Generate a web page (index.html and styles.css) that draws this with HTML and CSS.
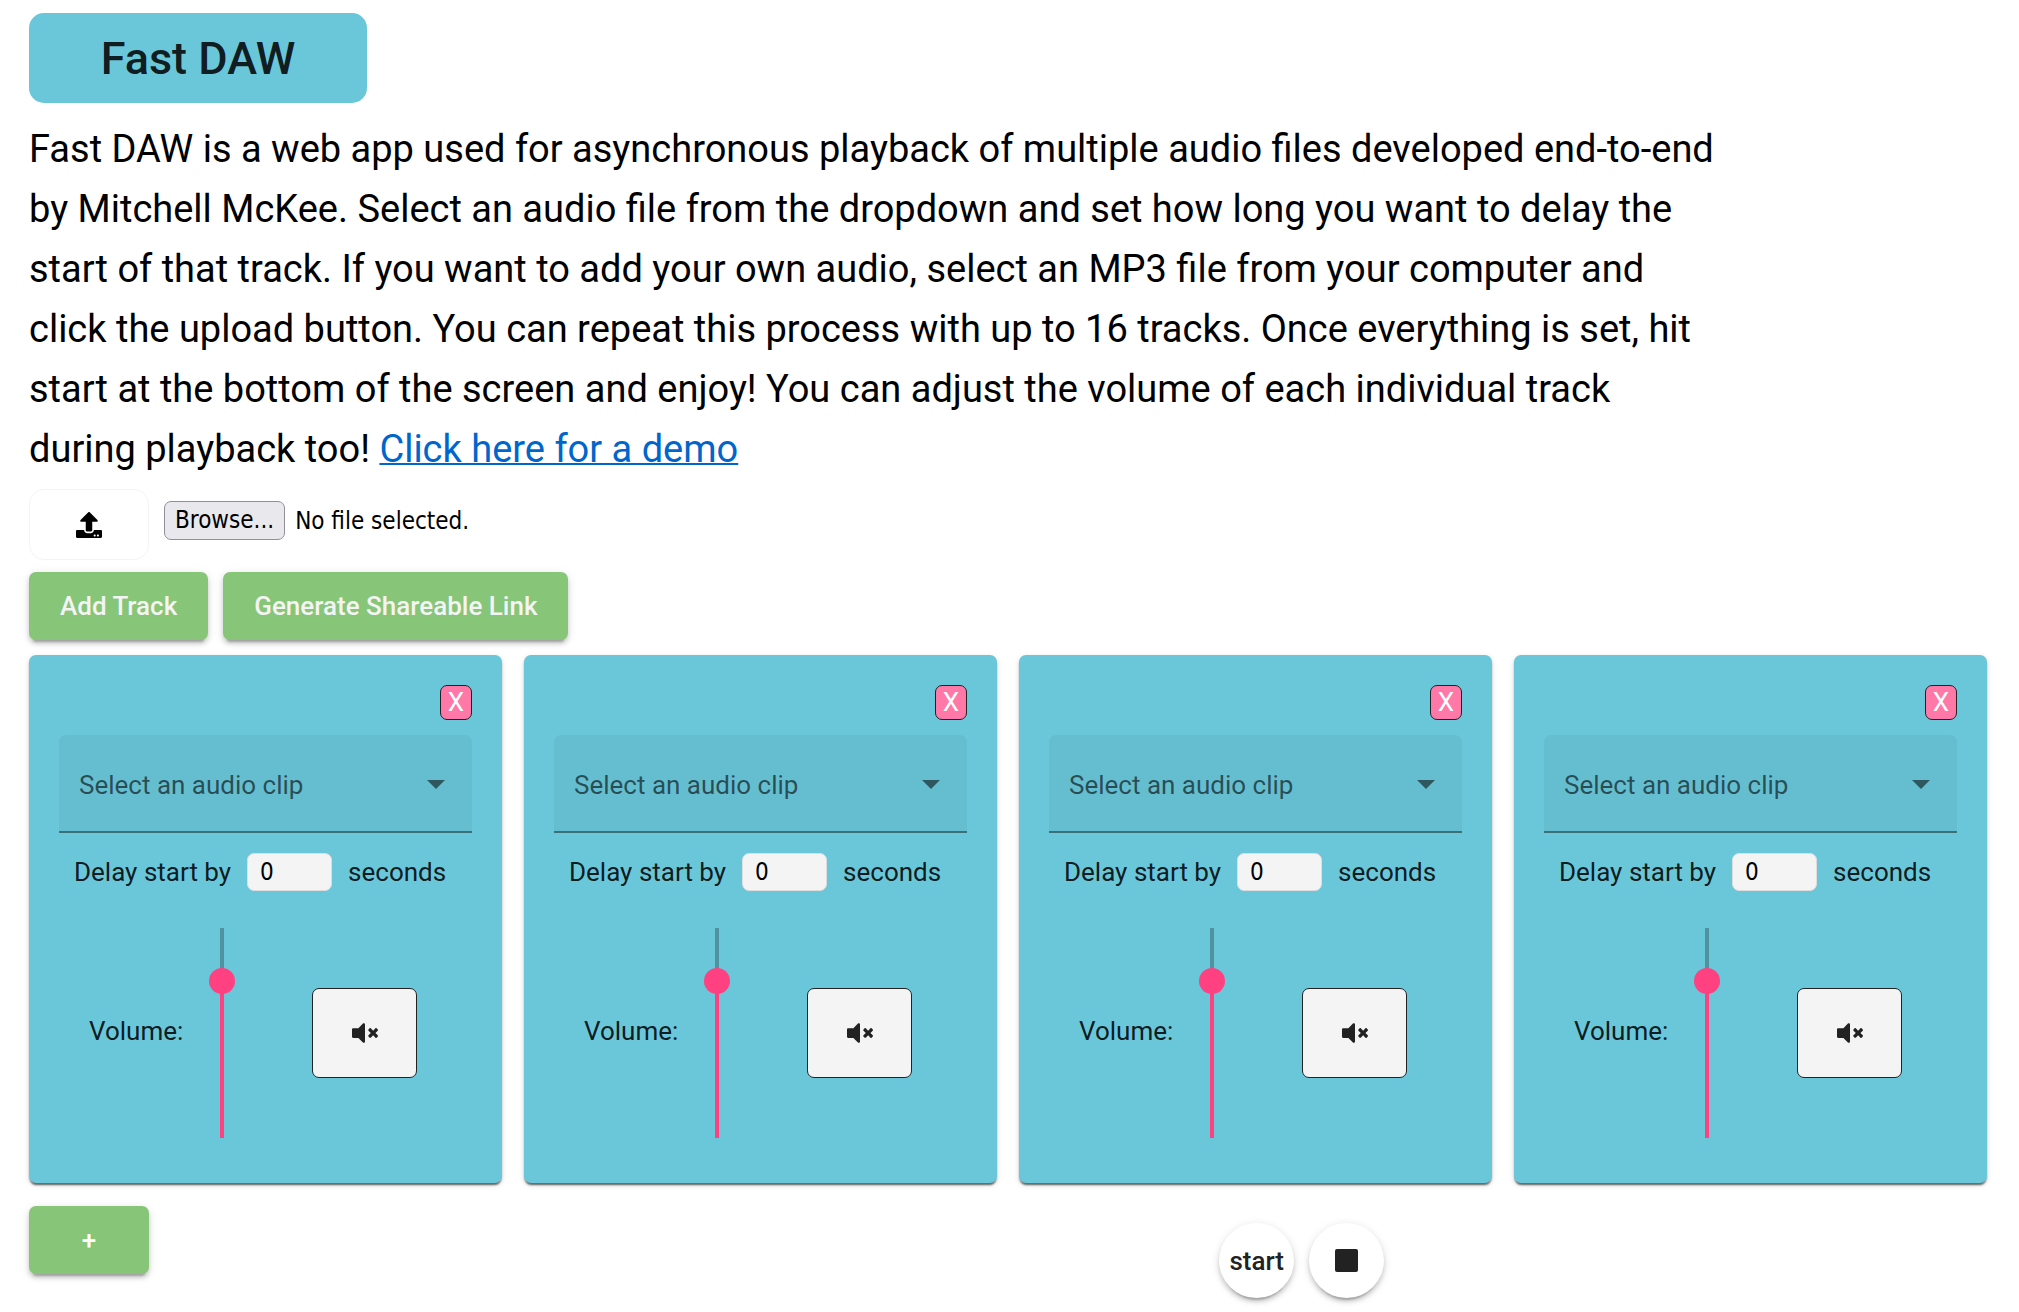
FILE: index.html
```html
<!DOCTYPE html>
<html lang="en">
<head>
<meta charset="utf-8">
<meta name="viewport" content="width=device-width, initial-scale=1">
<title>Fast DAW</title>
<link rel="stylesheet" href="styles.css">
</head>
<body>
<svg class="sprite" aria-hidden="true">
  <symbol id="icon-upload" viewBox="0 0 512 512"><path d="M296 384h-80c-13.3 0-24-10.7-24-24V192h-87.700c-17.800 0-26.700-21.500-14.100-34.100L242.300 5.700c7.500-7.500 19.800-7.500 27.300 0l152.200 152.200c12.600 12.600 3.700 34.100-14.100 34.100H320v168c0 13.300-10.700 24-24 24zm216-8v112c0 13.300-10.700 24-24 24H24c-13.300 0-24-10.700-24-24V376c0-13.300 10.700-24 24-24h136v8c0 30.900 25.100 56 56 56h80c30.900 0 56-25.100 56-56v-8h136c13.300 0 24 10.700 24 24zm-124 88c0-11-9-20-20-20s-20 9-20 20 9 20 20 20 20-9 20-20zm64 0c0-11-9-20-20-20s-20 9-20 20 9 20 20 20 20-9 20-20z"/></symbol>
  <symbol id="icon-mute" viewBox="0 0 512 512"><path d="M215.030 71.050L126.060 160H24c-13.260 0-24 10.740-24 24v144c0 13.250 10.740 24 24 24h102.060l88.970 88.950c15.030 15.030 40.970 4.470 40.970-16.970V88.020c0-21.460-25.960-31.980-40.970-16.970zM461.640 256l45.640-45.640c6.300-6.300 6.300-16.520 0-22.820l-22.820-22.820c-6.300-6.300-16.520-6.300-22.820 0L416 210.360l-45.640-45.640c-6.300-6.300-16.520-6.300-22.820 0l-22.820 22.820c-6.300 6.300-6.300 16.520 0 22.820L370.360 256l-45.630 45.630c-6.300 6.300-6.300 16.520 0 22.820l22.820 22.820c6.300 6.300 16.520 6.300 22.820 0L416 301.640l45.640 45.640c6.300 6.300 16.520 6.300 22.820 0l22.820-22.820c6.300-6.300 6.300-16.520 0-22.820L461.640 256z"/></symbol>
  <symbol id="icon-stop" viewBox="0 0 23 23"><rect width="23" height="23" rx="2"/></symbol>
  <symbol id="icon-arrow" viewBox="0 0 18 9"><path d="M0 0h18L9 9z"/></symbol>
</svg>

<header>
  <h1 class="brand">Fast DAW</h1>
  <p class="intro">Fast DAW is a web app used for asynchronous playback of multiple audio files developed end-to-end by Mitchell McKee. Select an audio file from the dropdown and set how long you want to delay the start of that track. If you want to add your own audio, select an MP3 file from your computer and click the upload button. You can repeat this process with up to 16 tracks. Once everything is set, hit start at the bottom of the screen and enjoy! You can adjust the volume of each individual track during playback too! <a href="#demo">Click here for a demo</a></p>
</header>

<main>
  <div class="upload">
    <button class="upload-button" type="button" aria-label="Upload"><svg class="icon"><use href="#icon-upload"/></svg></button>
    <label class="file">
      <input class="file-input" type="file" accept="audio/mpeg">
      <span class="file-browse">Browse...</span>
      <span>No file selected.</span>
    </label>
  </div>

  <div class="actions">
    <button class="raised" type="button">Add Track</button>
    <button class="raised" type="button">Generate Shareable Link</button>
  </div>

  <div class="tracks">
    <section class="card">
      <button class="remove" type="button">X</button>
      <div class="clip">
        <select class="clip-select" aria-label="Audio clip"><option>Select an audio clip</option></select>
        <svg class="clip-arrow"><use href="#icon-arrow"/></svg>
      </div>
      <label class="delay">Delay start by <input class="delay-input" type="number" min="0" value="0"> seconds</label>
      <div class="mixer">
        <label class="mixer-label" for="volume-1">Volume:</label>
        <input class="volume" id="volume-1" type="range" value="75">
        <button class="mute" type="button" aria-label="Mute"><svg class="icon"><use href="#icon-mute"/></svg></button>
      </div>
    </section>
    <section class="card">
      <button class="remove" type="button">X</button>
      <div class="clip">
        <select class="clip-select" aria-label="Audio clip"><option>Select an audio clip</option></select>
        <svg class="clip-arrow"><use href="#icon-arrow"/></svg>
      </div>
      <label class="delay">Delay start by <input class="delay-input" type="number" min="0" value="0"> seconds</label>
      <div class="mixer">
        <label class="mixer-label" for="volume-2">Volume:</label>
        <input class="volume" id="volume-2" type="range" value="75">
        <button class="mute" type="button" aria-label="Mute"><svg class="icon"><use href="#icon-mute"/></svg></button>
      </div>
    </section>
    <section class="card">
      <button class="remove" type="button">X</button>
      <div class="clip">
        <select class="clip-select" aria-label="Audio clip"><option>Select an audio clip</option></select>
        <svg class="clip-arrow"><use href="#icon-arrow"/></svg>
      </div>
      <label class="delay">Delay start by <input class="delay-input" type="number" min="0" value="0"> seconds</label>
      <div class="mixer">
        <label class="mixer-label" for="volume-3">Volume:</label>
        <input class="volume" id="volume-3" type="range" value="75">
        <button class="mute" type="button" aria-label="Mute"><svg class="icon"><use href="#icon-mute"/></svg></button>
      </div>
    </section>
    <section class="card">
      <button class="remove" type="button">X</button>
      <div class="clip">
        <select class="clip-select" aria-label="Audio clip"><option>Select an audio clip</option></select>
        <svg class="clip-arrow"><use href="#icon-arrow"/></svg>
      </div>
      <label class="delay">Delay start by <input class="delay-input" type="number" min="0" value="0"> seconds</label>
      <div class="mixer">
        <label class="mixer-label" for="volume-4">Volume:</label>
        <input class="volume" id="volume-4" type="range" value="75">
        <button class="mute" type="button" aria-label="Mute"><svg class="icon"><use href="#icon-mute"/></svg></button>
      </div>
    </section>
  </div>
</main>

<footer class="footer">
  <div><button class="raised raised-add" type="button">+</button></div>
  <div class="transport">
    <button class="fab" type="button">start</button>
    <button class="fab" type="button" aria-label="Stop"><svg class="icon-stop"><use href="#icon-stop"/></svg></button>
  </div>
</footer>
</body>
</html>
```

FILE: styles.css
```css
:root {
  --blue: #6ac6d9;
  --green: #87c578;
  --pink: #ff4081;
  --ink: rgba(0, 0, 0, 0.87);
  --ui: Roboto, "Liberation Sans", sans-serif;
  --system: "DejaVu Sans Condensed", "Noto Sans", sans-serif;
}

* {
  box-sizing: border-box;
}

body {
  margin: 0;
  padding: 13px 32px 14px 29px;
  background: #fff;
  color: #000;
  font-family: var(--ui);
  font-size: 26px;
  line-height: 38px;
}

button {
  margin: 0;
  padding: 0;
  font: inherit;
  cursor: pointer;
}

.sprite {
  display: none;
}

.brand {
  width: fit-content;
  min-width: 338px;
  margin: 0 0 16px;
  padding: 16px 30px 14px;
  border-radius: 15px;
  background: var(--blue);
  color: var(--ink);
  font-size: 45px;
  font-weight: 500;
  line-height: 60px;
  text-align: center;
}

.intro {
  max-width: 1692px;
  margin: 0 0 10px;
  font-size: 38px;
  line-height: 60px;
}

.intro a {
  color: #06c;
  text-decoration-thickness: 2px;
}

.upload {
  display: flex;
  gap: 15px;
  margin-bottom: 12px;
}

.upload-button {
  display: grid;
  place-items: center;
  width: 120px;
  height: 71px;
  border: 1px solid #f4f4f4;
  border-radius: 15px;
  background: #fff;
}

.icon {
  width: 26px;
  height: 26px;
  fill: currentColor;
}

.file {
  position: relative;
  display: flex;
  align-items: center;
  gap: 10px;
  height: 39px;
  margin-top: 12px;
  font-family: var(--system);
  font-size: 24px;
}

.file-input {
  position: absolute;
  inset: 0;
  width: 100%;
  opacity: 0;
}

.file-browse {
  padding: 0 10px;
  border: 1px solid #8f8f9d;
  border-radius: 7px;
  background: #e9e9ed;
  line-height: 37px;
}

.actions {
  display: flex;
  gap: 15px;
  margin-bottom: 15px;
}

.raised {
  padding: 0 31px;
  border: 0;
  border-radius: 7px;
  background: var(--green);
  box-shadow: 0 6px 2px -4px rgba(0, 0, 0, 0.2), 0 4px 4px rgba(0, 0, 0, 0.14), 0 2px 10px rgba(0, 0, 0, 0.12);
  color: #f4f4f4;
  font-weight: 500;
  line-height: 68px;
}

.raised-add {
  min-width: 120px;
  color: #fff;
}

.tracks {
  display: grid;
  grid-template-columns: repeat(4, 1fr);
  gap: 22px;
  margin-bottom: 23px;
}

.card {
  display: flex;
  flex-direction: column;
  padding: 30px 30px 32px;
  border-radius: 7px;
  background: var(--blue);
  box-shadow: 0 4px 2px -2px rgba(0, 0, 0, 0.4), 0 2px 2px rgba(0, 0, 0, 0.28), 0 2px 6px rgba(0, 0, 0, 0.12);
  color: var(--ink);
}

.remove {
  align-self: flex-end;
  width: 32px;
  height: 35px;
  margin-bottom: 15px;
  border: 1px solid #222;
  border-radius: 7px;
  background: #ff78a7;
  color: #fff;
  line-height: 33px;
}

.clip {
  display: grid;
  align-items: center;
  margin-bottom: 20px;
}

.clip-select,
.clip-arrow {
  grid-area: 1 / 1;
}

.clip-select {
  width: 100%;
  height: 98px;
  padding: 4px 60px 0 20px;
  border: 0;
  border-bottom: 2px solid rgba(0, 0, 0, 0.42);
  border-radius: 7px 7px 0 0;
  background: rgba(0, 0, 0, 0.04);
  color: rgba(0, 0, 0, 0.6);
  font: inherit;
  appearance: none;
}

.clip-arrow {
  justify-self: end;
  width: 18px;
  height: 9px;
  margin-right: 27px;
  fill: rgba(0, 0, 0, 0.54);
  pointer-events: none;
}

.delay {
  display: flex;
  align-items: center;
  gap: 16px;
  margin-bottom: 24px;
  padding-left: 15px;
}

.delay-input {
  width: 85px;
  height: 38px;
  padding: 0 12px;
  border: 1px solid #ddd;
  border-radius: 7px;
  background: #f4f4f4;
  color: #000;
  font-family: var(--system);
  font-size: 24px;
  appearance: textfield;
}

.mixer {
  display: flex;
  align-items: center;
  padding-left: 30px;
}

.mixer-label {
  padding-bottom: 4px;
}

/* Half a thumb of clear space stays at each end of the rail. */
.volume {
  width: 26px;
  height: 236px;
  margin: 0 77px 0 26px;
  background: linear-gradient(rgba(0, 0, 0, 0.26) 25%, var(--pink) 25%) center / 4px 210px no-repeat;
  appearance: none;
  writing-mode: vertical-lr;
  direction: rtl;
}

.volume::-webkit-slider-thumb {
  width: 26px;
  height: 26px;
  border-radius: 50%;
  background: var(--pink);
  appearance: none;
}

.mute {
  display: grid;
  place-items: center;
  width: 105px;
  height: 90px;
  border: 1px solid #222;
  border-radius: 7px;
  background: #f4f4f4;
  color: #222;
}

.footer {
  display: grid;
  grid-template-columns: 31fr 20fr;
}

.transport {
  display: flex;
  gap: 15px;
  padding-top: 17px;
}

.fab {
  display: grid;
  place-items: center;
  width: 75px;
  height: 75px;
  border: 0;
  border-radius: 50%;
  background: #fff;
  box-shadow: 0 6px 2px -4px rgba(0, 0, 0, 0.2), 0 4px 4px rgba(0, 0, 0, 0.14), 0 2px 10px rgba(0, 0, 0, 0.12);
  color: #222;
  font-weight: 500;
}

.icon-stop {
  width: 23px;
  height: 23px;
  fill: currentColor;
}
```
